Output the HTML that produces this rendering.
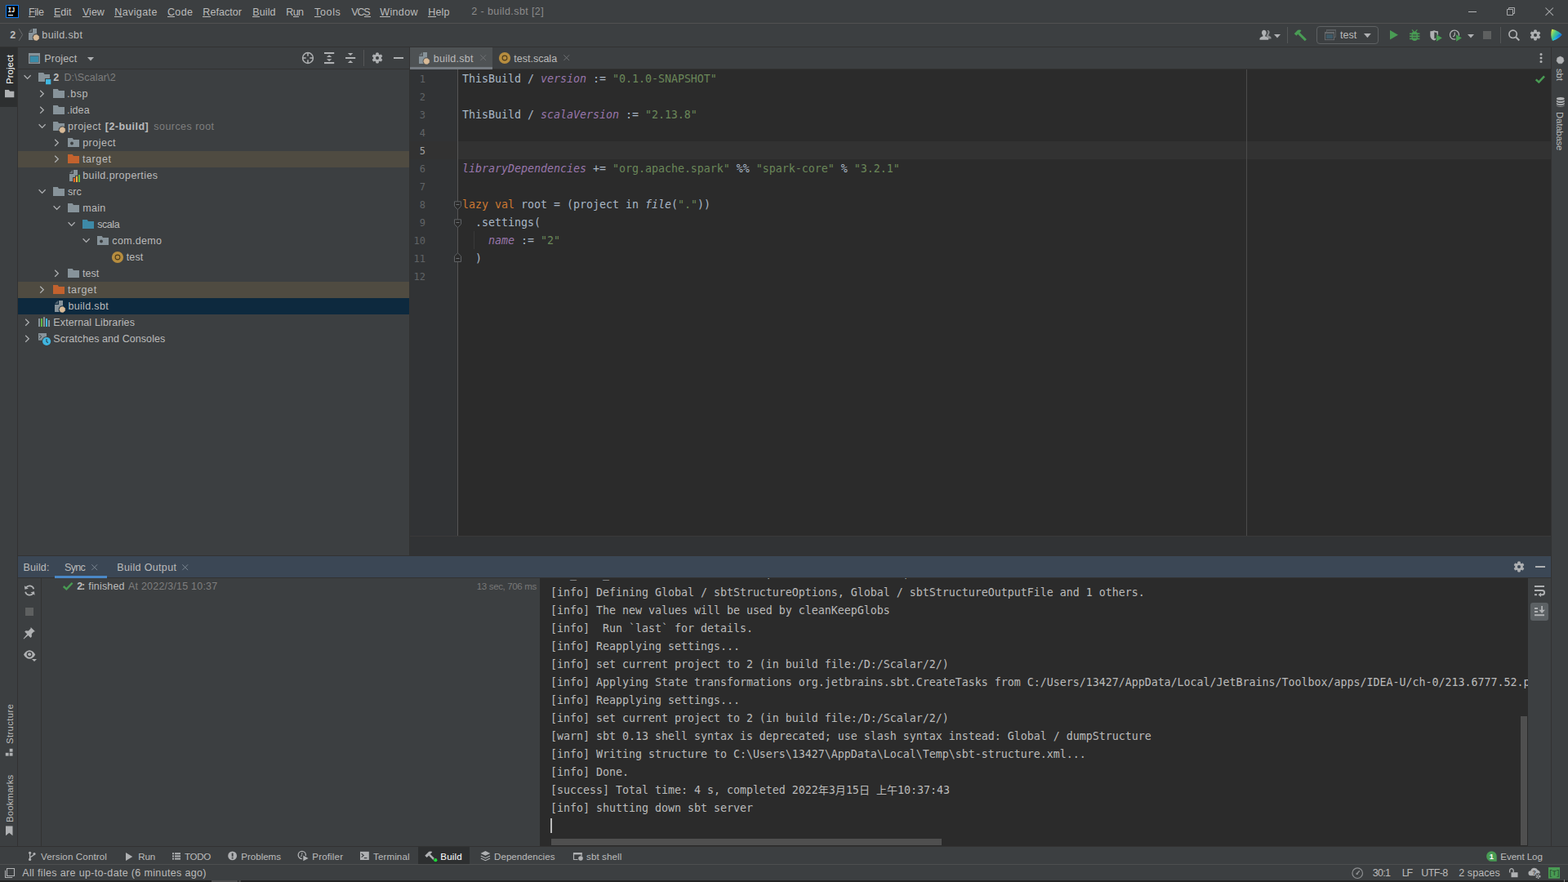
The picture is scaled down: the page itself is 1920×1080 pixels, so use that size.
<!DOCTYPE html>
<html lang="en"><head><meta charset="utf-8"><title>2 - build.sbt [2]</title>
<style>
html,body{margin:0;padding:0;}
body{width:1920px;height:1080px;overflow:hidden;background:#3c3f41;position:relative;font-family:"Liberation Sans", "Noto Sans CJK SC", sans-serif;font-size:12.5px;color:#bbbbbb;}
body>div,body>span,body>svg,.con>span{position:absolute;}
.t{white-space:pre;line-height:20px;height:20px;}
.t u{text-decoration:underline;text-underline-offset:1px;text-decoration-thickness:1px;}
.m{font-family:"DejaVu Sans Mono", "Liberation Mono", "Noto Sans CJK SC", monospace;font-size:13.29px;line-height:22px;height:22px;white-space:pre;}
.ln{text-align:right;font-size:12px;}
.cj{font-family:"Noto Sans CJK SC",sans-serif;font-size:13px;line-height:0;}
.v{white-space:pre;line-height:20px;height:20px;text-align:center;font-size:12px;}
.con{position:absolute;}
svg{overflow:visible;}
</style></head>
<body>
<div style="left:0px;top:28px;width:1920px;height:1px;background:#515151;"></div>
<div style="left:0px;top:57px;width:1920px;height:1px;background:#323232;"></div>
<div style="left:0px;top:58px;width:21px;height:73px;background:#2d2f30;"></div>
<div style="left:21px;top:58px;width:1px;height:979px;background:#323232;"></div>
<div style="left:22px;top:84px;width:480px;height:1px;background:#323232;"></div>
<div style="left:501px;top:58px;width:1px;height:623px;background:#323232;"></div>
<div style="left:22px;top:185px;width:479px;height:20px;background:#4f4b41;"></div>
<div style="left:22px;top:345px;width:479px;height:20px;background:#4f4b41;"></div>
<div style="left:22px;top:365px;width:479px;height:20px;background:#0d293e;"></div>
<div style="left:502px;top:58px;width:101px;height:26px;background:#4e5254;"></div>
<div style="left:502px;top:84px;width:1397px;height:1px;background:#323232;"></div>
<div style="left:502px;top:82px;width:101px;height:3px;background:#747a80;"></div>
<div style="left:502px;top:85px;width:1397px;height:572px;background:#2b2b2b;"></div>
<div style="left:502px;top:85px;width:58px;height:572px;background:#313335;"></div>
<div style="left:502px;top:173px;width:1397px;height:22px;background:#323232;"></div>
<div style="left:560px;top:85px;width:1px;height:572px;background:#555555;"></div>
<div style="left:1526px;top:85px;width:1px;height:572px;background:#4b4b4b;"></div>
<div style="left:502px;top:656px;width:1397px;height:1px;background:#3a3a3a;"></div>
<div style="left:502px;top:657px;width:1397px;height:24px;background:#313335;"></div>
<div style="left:22px;top:680px;width:1877px;height:1px;background:#323232;"></div>
<div style="left:22px;top:681px;width:1877px;height:26px;background:#3b4755;"></div>
<div style="left:22px;top:707px;width:1877px;height:1px;background:#323232;"></div>
<div style="left:67px;top:705px;width:64px;height:3px;background:#4a88c7;"></div>
<div style="left:50px;top:708px;width:1px;height:329px;background:#323232;"></div>
<div style="left:661px;top:708px;width:1210px;height:329px;background:#2b2b2b;"></div>
<div style="left:675px;top:1027px;width:478px;height:8px;background:#4f4f4f;"></div>
<div style="left:1862px;top:877px;width:8px;height:158px;background:#4f4f4f;"></div>
<div style="left:1874px;top:738px;width:22px;height:22px;background:#5c6164;border-radius:3px;"></div>
<div style="left:1899px;top:58px;width:1px;height:979px;background:#323232;"></div>
<div style="left:0px;top:1036px;width:1920px;height:1px;background:#323232;"></div>
<div style="left:512px;top:1037px;width:63px;height:21px;background:#2d2f30;"></div>
<div style="left:0px;top:1058px;width:1920px;height:1px;background:#4d4f50;"></div>
<div style="left:0px;top:1078px;width:1920px;height:2px;background:#222222;"></div>
<div style="left:259px;top:1078px;width:32px;height:2px;background:#4c4c4c;"></div>
<div style="left:292px;top:1078px;width:3px;height:2px;background:#444444;"></div>
<div style="left:1915px;top:1077px;width:1px;height:3px;background:#8a8a8a;"></div>
<span class="t" style="left:35.0px;top:5.0px;letter-spacing:-0.43px;">File</span>
<span class="t" style="left:66.0px;top:5.0px;">Edit</span>
<span class="t" style="left:101.0px;top:5.0px;">View</span>
<span class="t" style="left:140.3px;top:5.0px;letter-spacing:0.39px;">Navigate</span>
<span class="t" style="left:205.0px;top:5.0px;letter-spacing:0.33px;">Code</span>
<span class="t" style="left:248.3px;top:5.0px;letter-spacing:0.06px;">Refactor</span>
<span class="t" style="left:309.3px;top:5.0px;letter-spacing:0.10px;">Build</span>
<span class="t" style="left:350.3px;top:5.0px;letter-spacing:-0.65px;">Run</span>
<span class="t" style="left:385.0px;top:5.0px;letter-spacing:0.67px;">Tools</span>
<span class="t" style="left:430.3px;top:5.0px;letter-spacing:-1.20px;">VCS</span>
<span class="t" style="left:465.3px;top:5.0px;letter-spacing:0.34px;">Window</span>
<span class="t" style="left:524.3px;top:5.0px;letter-spacing:0.13px;">Help</span>
<span class="t" style="left:577.3px;top:4.0px;color:#8c8c8c;letter-spacing:0.40px;">2 - build.sbt [2]</span>
<span class="t" style="left:12.3px;top:33.0px;font-weight:bold;">2</span>
<span class="t" style="left:51.3px;top:33.0px;letter-spacing:0.38px;">build.sbt</span>
<span class="t" style="left:54.3px;top:62.0px;letter-spacing:0.17px;">Project</span>
<span class="t" style="left:1641.0px;top:33.0px;">test</span>
<span class="t" style="left:65.3px;top:85.4px;font-weight:bold;">2</span>
<span class="t" style="left:78.4px;top:85.4px;color:#7e7e7e;letter-spacing:0.14px;">D:\Scalar\2</span>
<span class="t" style="left:82.1px;top:105.4px;letter-spacing:0.57px;">.bsp</span>
<span class="t" style="left:82.1px;top:125.4px;letter-spacing:0.10px;">.idea</span>
<span class="t" style="left:83.1px;top:145.4px;letter-spacing:0.48px;">project</span>
<span class="t" style="left:128.8px;top:145.4px;font-weight:bold;letter-spacing:0.45px;">[2-build]</span>
<span class="t" style="left:188.3px;top:145.4px;color:#7e7e7e;letter-spacing:0.45px;">sources root</span>
<span class="t" style="left:101.2px;top:165.4px;letter-spacing:0.48px;">project</span>
<span class="t" style="left:100.9px;top:185.4px;letter-spacing:0.62px;">target</span>
<span class="t" style="left:101.2px;top:205.4px;letter-spacing:0.43px;">build.properties</span>
<span class="t" style="left:83.1px;top:225.4px;">src</span>
<span class="t" style="left:101.2px;top:245.4px;letter-spacing:0.30px;">main</span>
<span class="t" style="left:119.3px;top:265.4px;letter-spacing:-0.47px;">scala</span>
<span class="t" style="left:137.3px;top:285.4px;letter-spacing:0.34px;">com.demo</span>
<span class="t" style="left:154.8px;top:305.4px;letter-spacing:0.10px;">test</span>
<span class="t" style="left:100.9px;top:325.4px;letter-spacing:0.10px;">test</span>
<span class="t" style="left:82.9px;top:345.4px;letter-spacing:0.66px;">target</span>
<span class="t" style="left:83.4px;top:365.4px;letter-spacing:0.34px;">build.sbt</span>
<span class="t" style="left:65.3px;top:385.4px;letter-spacing:0.14px;">External Libraries</span>
<span class="t" style="left:65.3px;top:405.4px;letter-spacing:0.07px;">Scratches and Consoles</span>
<span class="t" style="left:530.7px;top:62.0px;letter-spacing:0.29px;">build.sbt</span>
<span class="t" style="left:629.3px;top:62.0px;">test.scala</span>
<span class="m ln" style="left:501px;top:86px;width:20px;color:#606366">1</span>
<span class="m" style="left:566px;top:86px"><span style="color:#a9b7c6;">ThisBuild / </span><span style="color:#9876aa;font-style:italic;">version</span><span style="color:#a9b7c6;"> := </span><span style="color:#6a8759;">&quot;0.1.0-SNAPSHOT&quot;</span></span>
<span class="m ln" style="left:501px;top:108px;width:20px;color:#606366">2</span>
<span class="m ln" style="left:501px;top:130px;width:20px;color:#606366">3</span>
<span class="m" style="left:566px;top:130px"><span style="color:#a9b7c6;">ThisBuild / </span><span style="color:#9876aa;font-style:italic;">scalaVersion</span><span style="color:#a9b7c6;"> := </span><span style="color:#6a8759;">&quot;2.13.8&quot;</span></span>
<span class="m ln" style="left:501px;top:152px;width:20px;color:#606366">4</span>
<span class="m ln" style="left:501px;top:174px;width:20px;color:#a4a3a3">5</span>
<span class="m ln" style="left:501px;top:196px;width:20px;color:#606366">6</span>
<span class="m" style="left:566px;top:196px"><span style="color:#9876aa;font-style:italic;">libraryDependencies</span><span style="color:#a9b7c6;"> += </span><span style="color:#6a8759;">&quot;org.apache.spark&quot;</span><span style="color:#a9b7c6;"> %% </span><span style="color:#6a8759;">&quot;spark-core&quot;</span><span style="color:#a9b7c6;"> % </span><span style="color:#6a8759;">&quot;3.2.1&quot;</span></span>
<span class="m ln" style="left:501px;top:218px;width:20px;color:#606366">7</span>
<span class="m ln" style="left:501px;top:240px;width:20px;color:#606366">8</span>
<span class="m" style="left:566px;top:240px"><span style="color:#cc7832;">lazy val </span><span style="color:#a9b7c6;">root = (project in </span><span style="color:#a9b7c6;font-style:italic;">file</span><span style="color:#a9b7c6;">(</span><span style="color:#6a8759;">&quot;.&quot;</span><span style="color:#a9b7c6;">))</span></span>
<span class="m ln" style="left:501px;top:262px;width:20px;color:#606366">9</span>
<span class="m" style="left:566px;top:262px"><span style="color:#a9b7c6;">  .settings(</span></span>
<span class="m ln" style="left:501px;top:284px;width:20px;color:#606366">10</span>
<span class="m" style="left:566px;top:284px"><span style="color:#a9b7c6;">    </span><span style="color:#9876aa;font-style:italic;">name</span><span style="color:#a9b7c6;"> := </span><span style="color:#6a8759;">&quot;2&quot;</span></span>
<span class="m ln" style="left:501px;top:306px;width:20px;color:#606366">11</span>
<span class="m" style="left:566px;top:306px"><span style="color:#a9b7c6;">  )</span></span>
<span class="m ln" style="left:501px;top:328px;width:20px;color:#606366">12</span>
<div style="left:580px;top:283px;width:1px;height:22px;background:#393939;"></div>
<span class="t" style="left:28.4px;top:685.0px;letter-spacing:0.16px;">Build:</span>
<span class="t" style="left:79.1px;top:685.0px;letter-spacing:-0.70px;">Sync</span>
<span class="t" style="left:143.3px;top:685.0px;letter-spacing:0.35px;">Build Output</span>
<span class="t" style="left:94.2px;top:708.0px;font-weight:bold;letter-spacing:-1.20px;">2:</span>
<span class="t" style="left:108.3px;top:708.0px;letter-spacing:0.16px;">finished</span>
<span class="t" style="left:157.0px;top:708.0px;color:#7e7e7e;letter-spacing:0.21px;">At 2022/3/15 10:37</span>
<span class="t" style="left:583.8px;top:708.0px;font-size:11.5px;color:#787878;letter-spacing:-0.35px;">13 sec, 706 ms</span>
<div class="con" style="left:661px;top:708px;width:1210px;height:319px;overflow:hidden">
<span class="m" style="left:13px;top:-16px;color:#bbb">   _    _                        ,                    ,</span>
<span class="m" style="left:13px;top:7px;color:#bbb">[info] Defining Global / sbtStructureOptions, Global / sbtStructureOutputFile and 1 others.</span>
<span class="m" style="left:13px;top:29px;color:#bbb">[info] The new values will be used by cleanKeepGlobs</span>
<span class="m" style="left:13px;top:51px;color:#bbb">[info]  Run `last` for details.</span>
<span class="m" style="left:13px;top:73px;color:#bbb">[info] Reapplying settings...</span>
<span class="m" style="left:13px;top:95px;color:#bbb">[info] set current project to 2 (in build file:/D:/Scalar/2/)</span>
<span class="m" style="left:13px;top:117px;color:#bbb">[info] Applying State transformations org.jetbrains.sbt.CreateTasks from C:/Users/13427/AppData/Local/JetBrains/Toolbox/apps/IDEA-U/ch-0/213.6777.52.plugins/Scala/launcher/sbt-structure-1.3.jar</span>
<span class="m" style="left:13px;top:139px;color:#bbb">[info] Reapplying settings...</span>
<span class="m" style="left:13px;top:161px;color:#bbb">[info] set current project to 2 (in build file:/D:/Scalar/2/)</span>
<span class="m" style="left:13px;top:183px;color:#bbb">[warn] sbt 0.13 shell syntax is deprecated; use slash syntax instead: Global / dumpStructure</span>
<span class="m" style="left:13px;top:205px;color:#bbb">[info] Writing structure to C:\Users\13427\AppData\Local\Temp\sbt-structure.xml...</span>
<span class="m" style="left:13px;top:227px;color:#bbb">[info] Done.</span>
<span class="m" style="left:13px;top:249px;color:#bbb">[success] Total time: 4 s, completed 2022<span class="cj">年</span>3<span class="cj">月</span>15<span class="cj">日</span> <span class="cj">上午</span>10:37:43</span>
<span class="m" style="left:13px;top:271px;color:#bbb">[info] shutting down sbt server</span>
</div>
<div style="left:674px;top:1002px;width:2px;height:18px;background:#bbbbbb;"></div>
<span class="t" style="left:50.0px;top:1039.0px;font-size:11.6px;letter-spacing:0.12px;">Version Control</span>
<span class="t" style="left:169.3px;top:1039.0px;font-size:11.6px;letter-spacing:-0.15px;">Run</span>
<span class="t" style="left:226.0px;top:1039.0px;font-size:11.6px;letter-spacing:-0.33px;">TODO</span>
<span class="t" style="left:295.3px;top:1039.0px;font-size:11.6px;letter-spacing:-0.04px;">Problems</span>
<span class="t" style="left:382.3px;top:1039.0px;font-size:11.6px;letter-spacing:0.14px;">Profiler</span>
<span class="t" style="left:457.0px;top:1039.0px;font-size:11.6px;letter-spacing:0.10px;">Terminal</span>
<span class="t" style="left:539.3px;top:1039.0px;font-size:11.6px;color:#ffffff;letter-spacing:0.18px;">Build</span>
<span class="t" style="left:605.0px;top:1039.0px;font-size:11.6px;letter-spacing:0.03px;">Dependencies</span>
<span class="t" style="left:718.0px;top:1039.0px;font-size:11.6px;letter-spacing:0.09px;">sbt shell</span>
<span class="t" style="left:1837.3px;top:1039.0px;font-size:11.6px;letter-spacing:-0.07px;">Event Log</span>
<span class="t" style="left:27.3px;top:1059.0px;letter-spacing:0.34px;">All files are up-to-date (6 minutes ago)</span>
<span class="t" style="left:1680.7px;top:1059.0px;letter-spacing:-0.67px;">30:1</span>
<span class="t" style="left:1716.7px;top:1059.0px;letter-spacing:-1.20px;">LF</span>
<span class="t" style="left:1740.3px;top:1059.0px;letter-spacing:-0.65px;">UTF-8</span>
<span class="t" style="left:1786.3px;top:1059.0px;letter-spacing:0.06px;">2 spaces</span>
<span class="t" style="left:2.4px;top:103.3px;transform-origin:0 0;transform:rotate(-90deg);font-size:11.4px;color:#ffffff;letter-spacing:0.07px;">Project</span>
<span class="t" style="left:2.4px;top:910.7px;transform-origin:0 0;transform:rotate(-90deg);font-size:11.4px;color:#bbbbbb;letter-spacing:0.34px;">Structure</span>
<span class="t" style="left:2.4px;top:1006.7px;transform-origin:0 0;transform:rotate(-90deg);font-size:11.4px;color:#bbbbbb;letter-spacing:0.16px;">Bookmarks</span>
<span class="t" style="left:1919.5px;top:84.4px;transform-origin:0 0;transform:rotate(90deg);font-size:11.4px;color:#bbbbbb;letter-spacing:-0.20px;">sbt</span>
<span class="t" style="left:1919.5px;top:136.7px;transform-origin:0 0;transform:rotate(90deg);font-size:11.4px;color:#bbbbbb;letter-spacing:-0.19px;">Database</span>
<svg style="left:7px;top:6px;" width="16" height="16" viewBox="0 0 16 16"><rect x="0.5" y="0.5" width="15" height="15" fill="#000" stroke="#087cfa" stroke-width="1"/><text x="2.800" y="9" font-family="'Liberation Mono',monospace" font-weight="bold" font-size="8.600" fill="#fff" textLength="8.400" lengthAdjust="spacingAndGlyphs" style="text-rendering:geometricPrecision">IJ</text><rect x="3" y="12" width="6" height="1.100" fill="#fff"/></svg>
<svg style="left:1797px;top:9px;" width="12" height="12" viewBox="0 0 12 12"><rect x="1" y="5" width="10" height="1" fill="#b4b6b8"/></svg>
<svg style="left:1844px;top:9px;" width="12" height="12" viewBox="0 0 12 12"><path d="M1.500 2.500h7v7h-7zM3.500 2.500v-2h7v7h-2" fill="none" stroke="#a8aaac" stroke-width="1"/></svg>
<svg style="left:1892px;top:9px;" width="12" height="12" viewBox="0 0 12 12"><path d="M0.5 0.5l9.4 9.4M9.9 0.5l-9.4 9.4" stroke="#a8aaac" stroke-width="1.05" fill="none"/></svg>
<svg style="left:22px;top:34px;" width="8" height="18" viewBox="0 0 8 18"><polyline points="1.2,1.2 5.6,8.5 1.2,15.8" fill="none" stroke="#6a6c6e" stroke-width="1"/></svg>
<svg style="left:32px;top:34px;" width="17" height="17" viewBox="0 0 17 17"><path d="M8 1h5v14h-10v-9h5z" fill="#87939a"/><path d="M7 1v4h-4z" fill="#87939a" opacity="0.6"/><circle cx="12.3" cy="12" r="4.700" fill="#3c3f41"/><polygon points="13.11,8.39 15.63,10.38 15.64,13.59 13.14,15.60 10.01,14.90 8.60,12.02 9.98,9.12" fill="#d9bb98" stroke="#d9bb98" stroke-width="0.500" stroke-linejoin="round"/></svg>
<svg style="left:1542px;top:36px;" width="16" height="14" viewBox="0 0 16 14"><path d="M9.6 1.2c1.5-.5 3 .5 3 2.4 0 1.4-.6 2.3-1.2 2.9v1.2c1.8.5 3.2 1.3 3.2 2.6v1.3h-4.3v-.9c0-1.3-.9-2.2-2.3-2.8l1.1-.4v-1.1c.8-.7 1.4-1.7 1.4-3.1 0-.8-.3-1.6-.9-2.1z" fill="#8a8c8e"/><path d="M5.6 0.8c1.9 0 3.1 1.3 3.1 3.3 0 1.5-.7 2.5-1.4 3.1v1.3c2.3.6 3.9 1.5 3.9 2.8v1.5h-10.7v-1.5c0-1.3 1.6-2.2 3.9-2.8v-1.3c-.7-.6-1.4-1.6-1.4-3.1 0-2 1.2-3.3 2.6-3.3z" fill="#afb1b3"/></svg>
<svg style="left:1560px;top:41.8px;" width="8" height="5.6" viewBox="0 0 8 5.6"><path d="M0 0h8l-4.0 4.6z" fill="#afb1b3"/></svg>
<div style="left:1576px;top:33px;width:1px;height:20px;background:#555758;"></div>
<svg style="left:1584px;top:35px;" width="17" height="16" viewBox="0 0 17 16"><g transform="rotate(-45 8 8)"><rect x="6.900" y="5" width="3" height="12.300" fill="#499c54"/><path d="M4.200 1.600h6.200l2.300 2v1.700h-8.500z" fill="#499c54"/></g></svg>
<div style="left:1612px;top:32px;width:74px;height:20px;border:1px solid #5e6163;border-radius:4px;box-sizing:content-box"></div>
<svg style="left:1621px;top:35px;" width="16" height="15" viewBox="0 0 16 15"><path d="M3.500 4v-2.500h11v9h-1.500" fill="none" stroke="#595d60" stroke-width="1"/><rect x="3" y="1" width="12" height="1.800" fill="#595d60"/><rect x="1.500" y="4.700" width="11" height="9" fill="#3c3f41" stroke="#666a6d" stroke-width="1"/><rect x="1" y="4.200" width="12" height="2" fill="#666a6d"/><rect x="3" y="7.200" width="8" height="5" fill="#3e5a68"/></svg>
<svg style="left:1669.6px;top:41.3px;" width="8.8" height="6.2" viewBox="0 0 8.8 6.2"><path d="M0 0h8.8l-4.4 5.2z" fill="#afb1b3"/></svg>
<svg style="left:1701.8px;top:37.2px;" width="10" height="11.6" viewBox="0 0 10 11.6"><path d="M0 0l10 5.8l-10 5.8z" fill="#499c54"/></svg>
<svg style="left:1725px;top:35px;" width="15" height="16" viewBox="0 0 15 16"><rect x="3.500" y="3.600" width="7.400" height="11.400" rx="3.700" fill="#499c54"/><path d="M1 6.300h12.400M1 9.400h12.400M1 12.500h12.400" stroke="#499c54" stroke-width="1.600" fill="none"/><path d="M4 1.300l2.200 2.600M10.400 1.300l-2.200 2.600" stroke="#499c54" stroke-width="1.200" fill="none"/><rect x="4.900" y="7.400" width="4.600" height="1.100" fill="#3c3f41"/><rect x="4.900" y="10.500" width="4.600" height="1.100" fill="#3c3f41"/></svg>
<svg style="left:1750px;top:36px;" width="17" height="16" viewBox="0 0 17 16"><path d="M1.300 2.300c1.700 0 3.400-.4 4.800-1.100c1.400.7 3.100 1.100 4.800 1.100v5.400c0 2.900-2.400 4.900-4.800 5.700c-2.400-.8-4.800-2.800-4.800-5.700z" fill="#afb1b3"/><path d="M6.300 3.200c1 .4 2 .6 3.100.7v3.800c0 1.700-1.400 3.100-3.100 3.900z" fill="#3c3f41"/><path d="M8.200 5.600l8.800 4.900l-8.800 5z" fill="#3c3f41"/><path d="M8.900 6.300l7 4.200l-7 4.300z" fill="#499c54"/></svg>
<svg style="left:1774px;top:35px;" width="17" height="17" viewBox="0 0 17 17"><circle cx="7" cy="7.700" r="5.500" fill="none" stroke="#afb1b3" stroke-width="1.300"/><path d="M7.300 4.600v3.200l-1.900 2.300" fill="none" stroke="#afb1b3" stroke-width="1.200"/><path d="M8.400 6.600l8.800 4.900l-8.800 5z" fill="#3c3f41"/><path d="M9.100 7.300l6.800 4.200l-6.800 4.300z" fill="#499c54"/></svg>
<svg style="left:1797px;top:41.9px;" width="8" height="5.6" viewBox="0 0 8 5.6"><path d="M0 0h8l-4.0 4.6z" fill="#afb1b3"/></svg>
<div style="left:1816px;top:38px;width:10px;height:10px;background:#5e6060;"></div>
<div style="left:1837px;top:33px;width:1px;height:20px;background:#555758;"></div>
<svg style="left:1846px;top:35px;" width="16" height="16" viewBox="0 0 16 16"><circle cx="6.600" cy="6.800" r="4.700" fill="none" stroke="#afb1b3" stroke-width="1.700"/><path d="M10 10.200l4.300 4.300" stroke="#afb1b3" stroke-width="2" fill="none"/></svg>
<svg style="left:1872px;top:35px;" width="16" height="16" viewBox="0 0 16 16"><polygon points="6.60,3.76 6.77,1.92 9.23,1.92 9.40,3.76 10.97,4.67 12.65,3.90 13.88,6.03 12.37,7.10 12.37,8.90 13.88,9.97 12.65,12.10 10.97,11.33 9.40,12.24 9.23,14.08 6.77,14.08 6.60,12.24 5.03,11.33 3.35,12.10 2.12,9.97 3.63,8.90 3.63,7.10 2.12,6.03 3.35,3.90 5.03,4.67" fill="#afb1b3" stroke="#afb1b3" stroke-width="0.9" stroke-linejoin="round"/><circle cx="8" cy="8" r="2.05" fill="#3c3f41"/></svg>
<svg style="left:1898px;top:35px;" width="16" height="16" viewBox="0 0 16 16"><defs><linearGradient id="lg1" x1="0" y1="0" x2="1" y2="0.6"><stop offset="0" stop-color="#f4e83a"/><stop offset="0.45" stop-color="#3fc58e"/><stop offset="1" stop-color="#1b7fe0"/></linearGradient><linearGradient id="lg2" x1="0" y1="1" x2="1" y2="0"><stop offset="0" stop-color="#27d1e8"/><stop offset="1" stop-color="#1565d8"/></linearGradient></defs><path d="M2.200 0.800c3.500 0.300 9.500 3.200 12.300 6.600c-2.800 3.600-8.300 6.800-11.700 7.300c-1.800-3.600-2-9.600-.6-13.900z" fill="url(#lg1)"/><path d="M3 14.600c1.700-2.500 4.600-5.600 8-7.600c1.300.3 2.500.3 3.500.400c-2.800 3.600-8.100 6.700-11.500 7.200z" fill="url(#lg2)"/></svg>
<svg style="left:35px;top:65px;" width="14" height="13" viewBox="0 0 14 13"><rect x="0" y="0" width="14" height="13" fill="#87939a"/><rect x="1.6" y="3.300" width="10.800" height="8.100" fill="#3c3f41"/><rect x="2" y="3.700" width="10" height="7.300" fill="#3a8ca9"/></svg>
<svg style="left:107px;top:70px;" width="8" height="5.6" viewBox="0 0 8 5.6"><path d="M0 0h8l-4.0 4.6z" fill="#afb1b3"/></svg>
<svg style="left:369px;top:63px;" width="16" height="16" viewBox="0 0 16 16"><circle cx="8" cy="8" r="6.400" fill="none" stroke="#afb1b3" stroke-width="1.500"/><path d="M8 1.500v4.200M8 10.300v4.200M1.500 8h4.200M10.300 8h4.200" stroke="#afb1b3" stroke-width="1.500"/></svg>
<svg style="left:396px;top:63px;" width="14" height="16" viewBox="0 0 14 16"><rect x="1" y="1" width="12.200" height="2" fill="#afb1b3"/><rect x="1" y="13" width="12.200" height="2.100" fill="#afb1b3"/><path d="M7.100 4.200l3.200 2.700h-6.400zM7.100 12l3.200-2.700h-6.400z" fill="#afb1b3"/></svg>
<svg style="left:422px;top:63px;" width="14" height="16" viewBox="0 0 14 16"><rect x="1" y="7" width="12.200" height="2" fill="#afb1b3"/><path d="M7.100 5l3.200-2.900h-6.400zM7.100 11l3.200 2.900h-6.400z" fill="#afb1b3"/></svg>
<div style="left:445px;top:61px;width:1px;height:20px;background:#555758;"></div>
<svg style="left:454px;top:63px;" width="16" height="16" viewBox="0 0 16 16"><polygon points="6.60,3.76 6.77,1.92 9.23,1.92 9.40,3.76 10.97,4.67 12.65,3.90 13.88,6.03 12.37,7.10 12.37,8.90 13.88,9.97 12.65,12.10 10.97,11.33 9.40,12.24 9.23,14.08 6.77,14.08 6.60,12.24 5.03,11.33 3.35,12.10 2.12,9.97 3.63,8.90 3.63,7.10 2.12,6.03 3.35,3.90 5.03,4.67" fill="#afb1b3" stroke="#afb1b3" stroke-width="0.9" stroke-linejoin="round"/><circle cx="8" cy="8" r="2.05" fill="#3c3f41"/></svg>
<div style="left:482px;top:70px;width:12px;height:2px;background:#afb1b3;"></div>
<svg style="left:29px;top:85px;" width="10" height="20" viewBox="0 0 10 20"><polyline points="0.6,7.3 4.6,11.4 8.6,7.3" fill="none" stroke="#afb1b3" stroke-width="1.25"/></svg>
<svg style="left:46px;top:87px;" width="17" height="17" viewBox="0 0 17 17"><path d="M1 2h6.300l1.200 2h6.500v9h-14z" fill="#87939a"/><rect x="9" y="9" width="8" height="8" fill="#3c3f41"/><rect x="10" y="10" width="6.300" height="6.300" fill="#40b6e0"/></svg>
<svg style="left:47px;top:105px;" width="10" height="20" viewBox="0 0 10 20"><polyline points="2.2,5.7 6.3,9.7 2.2,13.7" fill="none" stroke="#afb1b3" stroke-width="1.25"/></svg>
<svg style="left:64px;top:107px;" width="16" height="16" viewBox="0 0 16 16"><path d="M1 2h5.7l1.3 2h7v9h-14z" fill="#87939a"/></svg>
<svg style="left:47px;top:125px;" width="10" height="20" viewBox="0 0 10 20"><polyline points="2.2,5.7 6.3,9.7 2.2,13.7" fill="none" stroke="#afb1b3" stroke-width="1.25"/></svg>
<svg style="left:64px;top:127px;" width="16" height="16" viewBox="0 0 16 16"><path d="M1 2h5.7l1.3 2h7v9h-14z" fill="#87939a"/></svg>
<svg style="left:47px;top:145px;" width="10" height="20" viewBox="0 0 10 20"><polyline points="0.6,7.3 4.6,11.4 8.6,7.3" fill="none" stroke="#afb1b3" stroke-width="1.25"/></svg>
<svg style="left:64px;top:147px;" width="17" height="17" viewBox="0 0 17 17"><path d="M1 2h5.7l1.3 2h7v9h-14z" fill="#87939a"/><circle cx="12.3" cy="12.2" r="4.700" fill="#3c3f41"/><polygon points="13.11,8.59 15.63,10.58 15.64,13.79 13.14,15.80 10.01,15.10 8.60,12.22 9.98,9.32" fill="#d9bb98" stroke="#d9bb98" stroke-width="0.500" stroke-linejoin="round"/></svg>
<svg style="left:65px;top:165px;" width="10" height="20" viewBox="0 0 10 20"><polyline points="2.2,5.7 6.3,9.7 2.2,13.7" fill="none" stroke="#afb1b3" stroke-width="1.25"/></svg>
<svg style="left:82px;top:167px;" width="16" height="16" viewBox="0 0 16 16"><path d="M1 2h5.7l1.3 2h7v9h-14z" fill="#87939a"/><circle cx="6" cy="8.5" r="1.9" fill="#3c3f41"/></svg>
<svg style="left:65px;top:185px;" width="10" height="20" viewBox="0 0 10 20"><polyline points="2.2,5.7 6.3,9.7 2.2,13.7" fill="none" stroke="#afb1b3" stroke-width="1.25"/></svg>
<svg style="left:82px;top:187px;" width="16" height="16" viewBox="0 0 16 16"><path d="M1 2h5.7l1.3 2h7v9h-14z" fill="#c2622e"/></svg>
<svg style="left:82px;top:207px;" width="17" height="17" viewBox="0 0 17 17"><path d="M8 1h5v14h-10v-9h5z" fill="#87939a"/><path d="M7 1v4h-4z" fill="#87939a" opacity="0.6"/><path d="M7 10h3v-2.200h3v-1.800h4v11h-10z" fill="#3c3f41"/><rect x="8" y="11" width="2" height="5" fill="#f26522"/><rect x="11" y="8.800" width="2" height="7.200" fill="#f4af3d"/><rect x="14" y="7" width="2" height="9" fill="#62b543"/></svg>
<svg style="left:47px;top:225px;" width="10" height="20" viewBox="0 0 10 20"><polyline points="0.6,7.3 4.6,11.4 8.6,7.3" fill="none" stroke="#afb1b3" stroke-width="1.25"/></svg>
<svg style="left:64px;top:227px;" width="16" height="16" viewBox="0 0 16 16"><path d="M1 2h5.7l1.3 2h7v9h-14z" fill="#87939a"/></svg>
<svg style="left:65px;top:245px;" width="10" height="20" viewBox="0 0 10 20"><polyline points="0.6,7.3 4.6,11.4 8.6,7.3" fill="none" stroke="#afb1b3" stroke-width="1.25"/></svg>
<svg style="left:82px;top:247px;" width="16" height="16" viewBox="0 0 16 16"><path d="M1 2h5.7l1.3 2h7v9h-14z" fill="#87939a"/></svg>
<svg style="left:83px;top:265px;" width="10" height="20" viewBox="0 0 10 20"><polyline points="0.6,7.3 4.6,11.4 8.6,7.3" fill="none" stroke="#afb1b3" stroke-width="1.25"/></svg>
<svg style="left:100px;top:267px;" width="16" height="16" viewBox="0 0 16 16"><path d="M1 2h5.7l1.3 2h7v9h-14z" fill="#3e8aa8"/></svg>
<svg style="left:101px;top:285px;" width="10" height="20" viewBox="0 0 10 20"><polyline points="0.6,7.3 4.6,11.4 8.6,7.3" fill="none" stroke="#afb1b3" stroke-width="1.25"/></svg>
<svg style="left:118px;top:287px;" width="16" height="16" viewBox="0 0 16 16"><path d="M1 2h5.7l1.3 2h7v9h-14z" fill="#87939a"/><circle cx="6" cy="8.5" r="1.9" fill="#3c3f41"/></svg>
<svg style="left:136px;top:307px;" width="16" height="16" viewBox="0 0 16 16"><circle cx="8" cy="8" r="7.1" fill="#b78d3f"/><circle cx="8" cy="8" r="2.9" fill="none" stroke="#4d3c1c" stroke-width="1.1"/></svg>
<svg style="left:65px;top:325px;" width="10" height="20" viewBox="0 0 10 20"><polyline points="2.2,5.7 6.3,9.7 2.2,13.7" fill="none" stroke="#afb1b3" stroke-width="1.25"/></svg>
<svg style="left:82px;top:327px;" width="16" height="16" viewBox="0 0 16 16"><path d="M1 2h5.7l1.3 2h7v9h-14z" fill="#87939a"/></svg>
<svg style="left:47px;top:345px;" width="10" height="20" viewBox="0 0 10 20"><polyline points="2.2,5.7 6.3,9.7 2.2,13.7" fill="none" stroke="#afb1b3" stroke-width="1.25"/></svg>
<svg style="left:64px;top:347px;" width="16" height="16" viewBox="0 0 16 16"><path d="M1 2h5.7l1.3 2h7v9h-14z" fill="#c2622e"/></svg>
<svg style="left:64px;top:367px;" width="17" height="17" viewBox="0 0 17 17"><path d="M8 1h5v14h-10v-9h5z" fill="#87939a"/><path d="M7 1v4h-4z" fill="#87939a" opacity="0.6"/><circle cx="12.3" cy="12" r="4.700" fill="#0d293e"/><polygon points="13.11,8.39 15.63,10.38 15.64,13.59 13.14,15.60 10.01,14.90 8.60,12.02 9.98,9.12" fill="#d9bb98" stroke="#d9bb98" stroke-width="0.500" stroke-linejoin="round"/></svg>
<svg style="left:29px;top:385px;" width="10" height="20" viewBox="0 0 10 20"><polyline points="2.2,5.7 6.3,9.7 2.2,13.7" fill="none" stroke="#afb1b3" stroke-width="1.25"/></svg>
<svg style="left:46px;top:387px;" width="16" height="16" viewBox="0 0 16 16"><rect x="1" y="3" width="2" height="10" fill="#87939a"/><rect x="4" y="3" width="2" height="10" fill="#62b543"/><rect x="7" y="1.200" width="2" height="11.800" fill="#87939a"/><rect x="10" y="3" width="2" height="10" fill="#40b6e0"/><rect x="13" y="5" width="2" height="8" fill="#87939a"/></svg>
<svg style="left:29px;top:405px;" width="10" height="20" viewBox="0 0 10 20"><polyline points="2.2,5.7 6.3,9.7 2.2,13.7" fill="none" stroke="#afb1b3" stroke-width="1.25"/></svg>
<svg style="left:46px;top:407px;" width="17" height="17" viewBox="0 0 17 17"><path d="M1 1h10v8.700h-10z" fill="#87939a"/><path d="M2.300 3l2.500 2.300l-2.500 2.300" fill="none" stroke="#3c3f41" stroke-width="1"/><circle cx="11.100" cy="11" r="6" fill="#3c3f41"/><circle cx="11.100" cy="11" r="5.100" fill="#40b6e0"/><path d="M11 8v3.300l1.800 1.500" fill="none" stroke="#2b4a5a" stroke-width="1.200"/></svg>
<svg style="left:510px;top:63px;" width="17" height="17" viewBox="0 0 17 17"><path d="M8 1h5v14h-10v-9h5z" fill="#87939a"/><path d="M7 1v4h-4z" fill="#87939a" opacity="0.6"/><circle cx="12.3" cy="12" r="4.700" fill="#4e5254"/><polygon points="13.11,8.39 15.63,10.38 15.64,13.59 13.14,15.60 10.01,14.90 8.60,12.02 9.98,9.12" fill="#d9bb98" stroke="#d9bb98" stroke-width="0.500" stroke-linejoin="round"/></svg>
<svg style="left:587.5px;top:67px;" width="8" height="8" viewBox="0 0 8 8"><path d="M0.300 0.300l6.800 6.800M7.100 0.300l-6.800 6.800" stroke="#6e7073" stroke-width="1" fill="none"/></svg>
<svg style="left:610px;top:63px;" width="16" height="16" viewBox="0 0 16 16"><circle cx="8" cy="8" r="7.1" fill="#b78d3f"/><circle cx="8" cy="8" r="2.9" fill="none" stroke="#4d3c1c" stroke-width="1.1"/></svg>
<svg style="left:690.3px;top:67px;" width="8" height="8" viewBox="0 0 8 8"><path d="M0.300 0.300l6.800 6.800M7.100 0.300l-6.800 6.800" stroke="#6e7073" stroke-width="1" fill="none"/></svg>
<svg style="left:1885px;top:65px;" width="4" height="12" viewBox="0 0 4 12"><circle cx="2" cy="1.500" r="1.500" fill="#afb1b3"/><circle cx="2" cy="6" r="1.500" fill="#afb1b3"/><circle cx="2" cy="10.500" r="1.500" fill="#afb1b3"/></svg>
<svg style="left:1879px;top:92px;" width="14" height="11" viewBox="0 0 14 11"><path d="M1.700 5.300l3.600 3.300l6.700-7.300" fill="none" stroke="#499c54" stroke-width="2.500"/></svg>
<svg style="left:555px;top:239px;" width="12" height="22" viewBox="0 0 12 22"><path d="M1.500 7.800h8v5.700l-4 4.200l-4-4.200z" fill="#2b2b2b" stroke="#606366" stroke-width="1"/><path d="M3.500 11.500h4" stroke="#6e7175" stroke-width="1"/></svg>
<svg style="left:555px;top:261px;" width="12" height="22" viewBox="0 0 12 22"><path d="M1.500 7.800h8v5.700l-4 4.200l-4-4.200z" fill="#2b2b2b" stroke="#606366" stroke-width="1"/><path d="M3.500 11.500h4" stroke="#6e7175" stroke-width="1"/></svg>
<svg style="left:555px;top:305px;" width="12" height="22" viewBox="0 0 12 22"><path d="M1.500 15.500h8v-6.800l-4-3.900l-4 3.900z" fill="#2b2b2b" stroke="#606366" stroke-width="1"/><path d="M3.500 11.500h4" stroke="#6e7175" stroke-width="1"/></svg>
<svg style="left:112.3px;top:691.3px;" width="8" height="8" viewBox="0 0 8 8"><path d="M0.300 0.300l6.800 6.800M7.100 0.300l-6.800 6.800" stroke="#7a8591" stroke-width="1" fill="none"/></svg>
<svg style="left:223px;top:691.3px;" width="8" height="8" viewBox="0 0 8 8"><path d="M0.300 0.300l6.800 6.800M7.100 0.300l-6.800 6.800" stroke="#7a8591" stroke-width="1" fill="none"/></svg>
<svg style="left:1852px;top:686px;" width="16" height="16" viewBox="0 0 16 16"><polygon points="6.60,3.76 6.77,1.92 9.23,1.92 9.40,3.76 10.97,4.67 12.65,3.90 13.88,6.03 12.37,7.10 12.37,8.90 13.88,9.97 12.65,12.10 10.97,11.33 9.40,12.24 9.23,14.08 6.77,14.08 6.60,12.24 5.03,11.33 3.35,12.10 2.12,9.97 3.63,8.90 3.63,7.10 2.12,6.03 3.35,3.90 5.03,4.67" fill="#afb1b3" stroke="#afb1b3" stroke-width="0.9" stroke-linejoin="round"/><circle cx="8" cy="8" r="2.05" fill="#3b4755"/></svg>
<div style="left:1880px;top:693px;width:12px;height:2px;background:#afb1b3;"></div>
<svg style="left:29px;top:715px;" width="15" height="16" viewBox="0 0 15 16"><path d="M12.300 6.300a5.300 5.300 0 0 0-9.600-1.500" fill="none" stroke="#afb1b3" stroke-width="1.700"/><path d="M0.900 2.200l0.500 4.600l4.500-1z" fill="#afb1b3"/><path d="M2.100 9.700a5.300 5.300 0 0 0 9.600 1.500" fill="none" stroke="#afb1b3" stroke-width="1.700"/><path d="M13.500 13.800l-0.500-4.600l-4.500 1z" fill="#afb1b3"/></svg>
<div style="left:31px;top:744px;width:10px;height:10px;background:#5e6060;"></div>
<svg style="left:28px;top:767px;" width="16" height="16" viewBox="0 0 16 16"><path d="M9.700 1l5.300 5.300l-1.600 0.300l-2.700 2.700l0.200 3.200l-1.400 1.400l-3-3l-5.300 4.600l-0.600-0.600l4.600-5.300l-3-3l1.400-1.400l3.200 0.200l2.700-2.700z" fill="#afb1b3"/></svg>
<svg style="left:28px;top:794px;" width="18" height="17" viewBox="0 0 18 17"><path d="M1 7.500c1.600-3.100 4.100-5.300 7.100-5.300s5.500 2.200 7.100 5.300c-1.600 3.100-4.100 5.300-7.100 5.300s-5.500-2.200-7.100-5.300z" fill="#afb1b3"/><circle cx="8.100" cy="7.300" r="3.400" fill="#3c3f41"/><circle cx="8.100" cy="7.300" r="2" fill="#afb1b3"/><path d="M11 13h6l-3 3z" fill="#afb1b3"/></svg>
<svg style="left:76px;top:712px;" width="15" height="12" viewBox="0 0 15 12"><path d="M1.700 6l3.700 3.400l7.200-7.700" fill="none" stroke="#499c54" stroke-width="2.400"/></svg>
<svg style="left:1878px;top:716px;" width="15" height="16" viewBox="0 0 15 16"><rect x="1" y="1" width="12" height="2" fill="#afb1b3"/><path d="M1 7h9.500a2.600 2.600 0 0 1 0 5.200h-2.500" fill="none" stroke="#afb1b3" stroke-width="2"/><path d="M5.500 12.200l3.500-2.800v5.600z" fill="#afb1b3"/><rect x="1" y="11.200" width="3" height="2" fill="#afb1b3"/></svg>
<svg style="left:1878px;top:741px;" width="15" height="15" viewBox="0 0 15 15"><rect x="1" y="3" width="4" height="2" fill="#afb1b3"/><rect x="1" y="7" width="4" height="2" fill="#afb1b3"/><rect x="1" y="11.200" width="12" height="2" fill="#afb1b3"/><rect x="9.200" y="1" width="1.800" height="6" fill="#afb1b3"/><path d="M6.300 5.800h7.600l-3.800 4.200z" fill="#afb1b3"/></svg>
<svg style="left:34px;top:1042px;" width="11" height="13" viewBox="0 0 11 13"><circle cx="2.600" cy="2.300" r="1.600" fill="#afb1b3"/><circle cx="2.600" cy="10.400" r="1.600" fill="#afb1b3"/><circle cx="8" cy="3.600" r="1.600" fill="#afb1b3"/><path d="M2.600 2.300v8M8 3.600c0 3-5.400 2.600-5.400 5.400" fill="none" stroke="#afb1b3" stroke-width="1.300"/></svg>
<svg style="left:154px;top:1043.7px;" width="8.3" height="10" viewBox="0 0 8.3 10"><path d="M0 0l8.3 5.0l-8.3 5.0z" fill="#afb1b3"/></svg>
<svg style="left:210px;top:1043px;" width="12" height="11" viewBox="0 0 12 11"><rect x="1" y="1.200" width="2" height="2" fill="#afb1b3"/><rect x="4" y="1.200" width="7" height="2" fill="#afb1b3"/><rect x="1" y="4.400" width="2" height="2" fill="#afb1b3"/><rect x="4" y="4.400" width="7" height="2" fill="#afb1b3"/><rect x="1" y="7.600" width="2" height="2" fill="#afb1b3"/><rect x="4" y="7.600" width="7" height="2" fill="#afb1b3"/></svg>
<svg style="left:279px;top:1042px;" width="12" height="12" viewBox="0 0 12 12"><circle cx="5.600" cy="5.900" r="5.400" fill="#afb1b3"/><rect x="4.700" y="2.600" width="1.900" height="4.200" fill="#3c3f41"/><rect x="4.700" y="7.700" width="1.900" height="1.800" fill="#3c3f41"/></svg>
<svg style="left:364px;top:1041px;" width="15" height="14" viewBox="0 0 15 14"><circle cx="5.800" cy="6" r="4.600" fill="none" stroke="#afb1b3" stroke-width="1.300"/><path d="M5.800 3.300v3l-1.500 1.500" fill="none" stroke="#afb1b3" stroke-width="1.100"/><path d="M6.600 6l7.600 3.800l-7.600 4z" fill="#3c3f41" stroke="#3c3f41" stroke-width="1.500"/><path d="M7.300 6.600l6.300 3.300l-6.300 3.300z" fill="#afb1b3"/></svg>
<svg style="left:440px;top:1042px;" width="13" height="12" viewBox="0 0 13 12"><rect x="1" y="0.800" width="10.800" height="10.200" fill="#afb1b3"/><path d="M2.600 3.200l2.600 2.200l-2.600 2.200" fill="none" stroke="#3c3f41" stroke-width="1.200"/><rect x="5.800" y="8" width="3.600" height="1.200" fill="#3c3f41"/></svg>
<svg style="left:521px;top:1042px;" width="16" height="14" viewBox="0 0 16 14"><g transform="rotate(-45 6.500 6.500)"><rect x="5.400" y="4" width="2.500" height="10.500" fill="#afb1b3"/><path d="M2 0.800h7l2.200 1.900v1.500h-9.200z" fill="#afb1b3"/></g><circle cx="12.300" cy="11.200" r="2.700" fill="#2d2f30"/><circle cx="12.300" cy="11.200" r="2.100" fill="#1fd63a"/></svg>
<svg style="left:588px;top:1041px;" width="14" height="15" viewBox="0 0 14 15"><path d="M6.400 1l5.900 2.900l-5.900 2.900l-5.900-2.900z" fill="#afb1b3"/><path d="M0.800 7l5.600 2.700l5.600-2.700M0.800 10l5.600 2.700l5.600-2.700" fill="none" stroke="#afb1b3" stroke-width="1.200"/></svg>
<svg style="left:701px;top:1043px;" width="14" height="12" viewBox="0 0 14 12"><path d="M1.500 1.500h9.500v4M1.500 1.500v8h5" fill="none" stroke="#afb1b3" stroke-width="1.200"/><rect x="1" y="1" width="10.600" height="2.400" fill="#afb1b3"/><circle cx="10" cy="8" r="2.800" fill="#afb1b3"/></svg>
<svg style="left:1820px;top:1042px;" width="13" height="13" viewBox="0 0 13 13"><path d="M6.400 0.200a6.300 6.300 0 0 1 6.300 6.300v6.300h-6.300a6.300 6.300 0 0 1 0-12.600z" fill="#499c54"/><text x="3.700" y="10" font-family="'Liberation Sans',sans-serif" font-weight="bold" font-size="9.400" fill="#fff">1</text></svg>
<svg style="left:5px;top:1062px;" width="14" height="14" viewBox="0 0 14 14"><path d="M3.500 1.500h9v9h-9z" fill="none" stroke="#afb1b3" stroke-width="1.100"/><path d="M1.500 3.800v8.700h8.700" fill="none" stroke="#afb1b3" stroke-width="1.100"/></svg>
<svg style="left:1655px;top:1062px;" width="15" height="15" viewBox="0 0 15 15"><circle cx="7.200" cy="7.200" r="6.300" fill="none" stroke="#8b8d8f" stroke-width="1.200"/><path d="M6.400 8l3.400-3.700" stroke="#8b8d8f" stroke-width="1.500" fill="none"/><circle cx="6.600" cy="7.900" r="1.200" fill="#8b8d8f"/></svg>
<svg style="left:1847px;top:1062px;" width="13" height="13" viewBox="0 0 13 13"><rect x="3.500" y="6.200" width="8" height="6" fill="#afb1b3"/><path d="M1.600 6.400v-2.400a2.300 2.300 0 0 1 4.600 0v2.300" fill="none" stroke="#afb1b3" stroke-width="1.300"/></svg>
<svg style="left:1871px;top:1062px;" width="17" height="15" viewBox="0 0 17 15"><path d="M3.600 10.200a3 3 0 0 1-.3-6a4.600 4.600 0 0 1 8.700-.6a3.300 3.300 0 0 1 2.600 4.200l-3.600 2.400z" fill="#afb1b3"/><text x="5.300" y="8.600" font-family="'Liberation Sans',sans-serif" font-weight="bold" font-size="7.500" fill="#3c3f41">?</text><circle cx="12.400" cy="11" r="3.800" fill="#3c3f41"/><circle cx="12.400" cy="11" r="2.300" fill="none" stroke="#afb1b3" stroke-width="1.500" stroke-dasharray="1.300 1.100"/><circle cx="12.400" cy="11" r="1.500" fill="#afb1b3"/><circle cx="12.400" cy="11" r="0.700" fill="#3c3f41"/></svg>
<svg style="left:1896px;top:1062px;" width="14" height="14" viewBox="0 0 14 14"><rect x="0" y="0" width="14" height="13.700" fill="#499c54"/><text x="7" y="10" text-anchor="middle" font-family="'Liberation Mono',monospace" font-weight="bold" font-size="8.500" fill="#2f5a35" letter-spacing="-0.6">[T]</text></svg>
<svg style="left:5px;top:109px;" width="13" height="11" viewBox="0 0 13 11"><path d="M1 1h4.800l1.300 1.800h5.200v7.500h-11.300z" fill="#afb1b3"/></svg>
<svg style="left:6px;top:916px;" width="11" height="11" viewBox="0 0 11 11"><rect x="5.700" y="0.800" width="3.800" height="3.800" fill="#afb1b3"/><rect x="0.800" y="5.800" width="3.800" height="3.800" fill="#afb1b3"/><rect x="5.700" y="5.800" width="3.800" height="3.800" fill="#afb1b3"/></svg>
<svg style="left:6px;top:1011px;" width="11" height="13" viewBox="0 0 11 13"><path d="M1 0.600h8.500v11.600l-4.250-3.400l-4.250 3.400z" fill="#afb1b3"/></svg>
<svg style="left:1905px;top:68px;" width="12" height="12" viewBox="0 0 12 12"><polygon points="5.50,1.10 9.10,2.83 9.98,6.72 7.50,9.84 3.50,9.84 1.02,6.72 1.90,2.83" fill="#afb1b3" stroke="#afb1b3" stroke-width="0.500" stroke-linejoin="round"/></svg>
<svg style="left:1905px;top:118px;" width="12" height="14" viewBox="0 0 12 14"><ellipse cx="5.800" cy="2.800" rx="4.900" ry="1.900" fill="#afb1b3"/><path d="M0.900 4.300c0 2.400 9.800 2.400 9.800 0v1.900c0 2.400-9.800 2.400-9.800 0zM0.900 7.400c0 2.400 9.800 2.400 9.800 0v1.900c0 2.400-9.800 2.400-9.800 0zM0.900 10.500c0 2.400 9.800 2.400 9.800 0v0.600c0 2.400-9.800 2.400-9.800 0z" fill="#afb1b3"/></svg>
<div style="left:35px;top:20px;width:8px;height:1px;background:#bbbbbb;"></div>
<div style="left:66px;top:20px;width:8px;height:1px;background:#bbbbbb;"></div>
<div style="left:101px;top:20px;width:9px;height:1px;background:#bbbbbb;"></div>
<div style="left:140px;top:20px;width:10px;height:1px;background:#bbbbbb;"></div>
<div style="left:205px;top:20px;width:9px;height:1px;background:#bbbbbb;"></div>
<div style="left:248px;top:20px;width:10px;height:1px;background:#bbbbbb;"></div>
<div style="left:309px;top:20px;width:9px;height:1px;background:#bbbbbb;"></div>
<div style="left:359px;top:20px;width:7px;height:1px;background:#bbbbbb;"></div>
<div style="left:385px;top:20px;width:8px;height:1px;background:#bbbbbb;"></div>
<div style="left:446px;top:20px;width:8px;height:1px;background:#bbbbbb;"></div>
<div style="left:465px;top:20px;width:13px;height:1px;background:#bbbbbb;"></div>
<div style="left:524px;top:20px;width:10px;height:1px;background:#bbbbbb;"></div>
</body></html>
